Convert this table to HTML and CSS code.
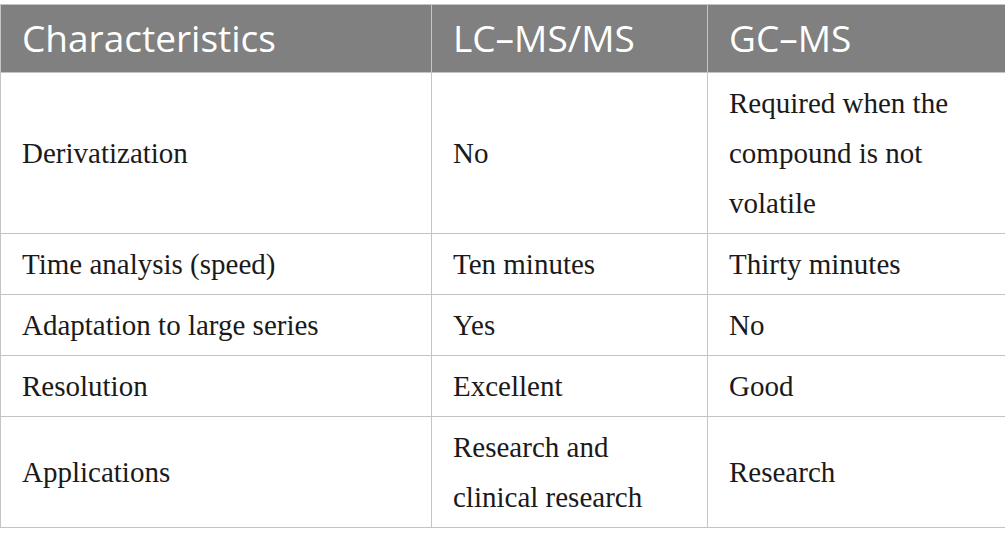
FILE: index.html
```html
<!DOCTYPE html>
<html lang="en">
<head>
	<meta charset="UTF-8">
	<title>LC-MS/MS vs GC-MS</title>
	<link rel="stylesheet" href="styles.css">
</head>
<body>
	<table class="compare">
		<colgroup>
			<col class="col-a">
			<col class="col-b">
			<col class="col-c">
		</colgroup>
		<thead>
			<tr>
				<th>Characteristics</th>
				<th>LC–MS/MS</th>
				<th>GC–MS</th>
			</tr>
		</thead>
		<tbody>
			<tr class="tall">
				<td>Derivatization</td>
				<td>No</td>
				<td>Required when the compound is not volatile</td>
			</tr>
			<tr>
				<td>Time analysis (speed)</td>
				<td>Ten minutes</td>
				<td>Thirty minutes</td>
			</tr>
			<tr>
				<td>Adaptation to large series</td>
				<td>Yes</td>
				<td>No</td>
			</tr>
			<tr>
				<td>Resolution</td>
				<td>Excellent</td>
				<td>Good</td>
			</tr>
			<tr>
				<td>Applications</td>
				<td>Research and clinical research</td>
				<td>Research</td>
			</tr>
		</tbody>
	</table>
</body>
</html>
```

FILE: styles.css
```css
body{
	margin:4px 0 0;
	background:#fff;
}
.compare{
	width:1005px;
	border-collapse:collapse;
	table-layout:fixed;
}
.col-a{width:431px;}
.col-b{width:276px;}
.col-c{width:298px;}

.compare th,
.compare td{
	border:1px solid #c4c4c4;
	text-align:left;
	vertical-align:middle;
	padding-left:21px;
	padding-right:16px;
}
/*header*/
.compare th{
	background:#808080;
	color:#fff;
	font-family:"Open Sans","Noto Sans",sans-serif;
	font-weight:400;
	font-size:37px;
	line-height:48px;
	padding-top:9px;
	padding-bottom:10px;
}
/*body*/
.compare td{
	color:#1a1a1a;
	font-family:"Liberation Serif","DejaVu Serif",serif;
	font-size:29px;
	line-height:50px;
	padding-top:5px;
	padding-bottom:5px;
}
```
